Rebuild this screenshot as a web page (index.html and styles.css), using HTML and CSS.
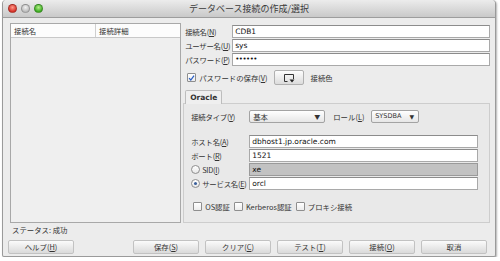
FILE: index.html
```html
<!DOCTYPE html>
<html lang="ja">
<head>
    <meta charset="UTF-8">
    <title>データベース接続の作成/選択</title>
    <link rel="stylesheet" href="styles.css">
</head>
<body>
    <div class="window">
        <div class="titlebar">
            <div class="lights">
                <span class="light red"></span>
                <span class="light gray"></span>
                <span class="light green"></span>
            </div>
            <div class="title">データベース接続の作成/選択</div>
        </div>

        <div class="main">
            <div class="left">
                <div class="list">
                    <div class="list-head">
                        <div class="col col-name">接続名</div>
                        <div class="col col-detail">接続詳細</div>
                    </div>
                </div>
                <div class="status">ステータス: 成功</div>
            </div>

            <div class="right">
                <div class="row">
                    <label class="label">接続名(<u>N</u>)</label>
                    <div class="input">CDB1</div>
                </div>
                <div class="row">
                    <label class="label">ユーザー名(<u>U</u>)</label>
                    <div class="input">sys</div>
                </div>
                <div class="row">
                    <label class="label">パスワード(<u>P</u>)</label>
                    <div class="input dots">••••••</div>
                </div>

                <div class="save-row">
                    <span class="check checked">
                        <svg width="8" height="8" viewBox="0 0 8 8"><path d="M1.2 4.2 L3.2 6.3 L6.9 1.2" fill="none" stroke="#2a5fc4" stroke-width="1.4"/></svg>
                    </span>
                    <span class="save-text">パスワードの保存(<u>V</u>)</span>
                    <button class="color-btn">
                        <svg width="12" height="10" viewBox="0 0 12 10"><path d="M4.5 8.5 H1.5 V1.5 H10.5 V6" fill="none" stroke="#333" stroke-width="1"/><path d="M6.5 6.5 H11.5 L9 9.5 Z" fill="#222"/></svg>
                    </button>
                    <span class="color-text">接続色</span>
                </div>

                <div class="tabs">
                    <div class="tab">Oracle</div>
                </div>
                <div class="panel">
                    <div class="type-row">
                        <span class="label-in">接続タイプ(<u>Y</u>)</span>
                        <div class="select select-type">基本<span class="arrow">▼</span></div>
                        <span class="role-label">ロール(<u>L</u>)</span>
                        <div class="select select-role">SYSDBA<span class="arrow">▼</span></div>
                    </div>

                    <div class="fields">
                        <div class="row">
                            <span class="label-in">ホスト名(<u>A</u>)</span>
                            <div class="input">dbhost1.jp.oracle.com</div>
                        </div>
                        <div class="row">
                            <span class="label-in">ポート(<u>R</u>)</span>
                            <div class="input">1521</div>
                        </div>
                        <div class="row">
                            <span class="label-in"><span class="radio"></span>SID(<u>I</u>)</span>
                            <div class="input disabled">xe</div>
                        </div>
                        <div class="row">
                            <span class="label-in"><span class="radio on"></span>サービス名(<u>E</u>)</span>
                            <div class="input">orcl</div>
                        </div>
                    </div>

                    <div class="opts">
                        <span class="check"></span><span class="opt">OS認証</span>
                        <span class="check"></span><span class="opt">Kerberos認証</span>
                        <span class="check"></span><span class="opt">プロキシ接続</span>
                    </div>
                </div>
            </div>
        </div>

        <div class="buttons">
            <button class="btn help">ヘルプ(<u>H</u>)</button>
            <button class="btn">保存(<u>S</u>)</button>
            <button class="btn">クリア(<u>C</u>)</button>
            <button class="btn">テスト(<u>T</u>)</button>
            <button class="btn">接続(<u>O</u>)</button>
            <button class="btn">取消</button>
        </div>
    </div>
</body>
</html>
```

FILE: styles.css
```css
body {
    margin: 0;
    background: #ffffff;
    font-family: "Noto Sans CJK JP", "Liberation Sans", sans-serif;
    font-size: 7.4px;
    color: #333333;
}

u {
    text-decoration: underline;
    text-underline-offset: 1px;
}

.window {
    width: 494px;
    height: 257px;
    margin-left: 2px;
    background: #ececec;
    border: 1px solid #9a9a9a;
    border-top: none;
    border-radius: 4px 4px 2px 2px;
    box-shadow: 1px 1px 2px rgba(0, 0, 0, 0.3);
    box-sizing: border-box;
    overflow: hidden;
}

.titlebar {
    height: 17px;
    display: flex;
    align-items: center;
    position: relative;
    background: linear-gradient(#ececec, #c9c9c9);
    border-bottom: 1px solid #9d9d9d;
    border-radius: 4px 4px 0 0;
}

.lights {
    display: flex;
    gap: 4px;
    padding-left: 5px;
}

.light {
    width: 9px;
    height: 9px;
    border-radius: 50%;
    box-sizing: border-box;
    border: 1px solid rgba(0, 0, 0, 0.25);
}

.light.red { background: radial-gradient(circle at 50% 35%, #ff9a8a, #d8332a 70%); }
.light.gray { background: radial-gradient(circle at 50% 35%, #f2f2f2, #bdbdbd 70%); }
.light.green { background: radial-gradient(circle at 50% 35%, #b5f08a, #3fae25 70%); }

.title {
    position: absolute;
    left: 0;
    right: 0;
    text-align: center;
    font-size: 9px;
    color: #3a3a3a;
}

.main {
    display: flex;
    padding: 5px 5px 0 7px;
}

.left {
    width: 173px;
}

.list {
    height: 198px;
    border: 1px solid #a8a8a8;
    background: #efefef;
}

.list-head {
    display: flex;
    height: 13px;
    background: #fcfcfc;
    border-bottom: 1px solid #c8c8c8;
    line-height: 13px;
}

.col {
    padding-left: 3px;
}

.col-name {
    width: 81px;
    border-right: 1px solid #cfcfcf;
}

.status {
    margin-top: 1px;
    padding-left: 2px;
    line-height: 12px;
}

.right {
    width: 310px;
    margin-left: 2px;
}

.row {
    display: flex;
    align-items: center;
    height: 14px;
}

.right > .row:first-child {
    margin-top: 1px;
}

.label {
    flex: none;
    width: 47px;
    padding-left: 2px;
    white-space: nowrap;
    letter-spacing: -0.25px;
}

.input {
    flex: 1;
    height: 13px;
    box-sizing: border-box;
    background: #fff;
    border: 1px solid #a9a9a9;
    border-top-color: #8c8c8c;
    padding-left: 2px;
    line-height: 11px;
    font-family: "DejaVu Sans", sans-serif;
    font-size: 7.5px;
    color: #111;
}

.input.dots {
    font-size: 7px;
    letter-spacing: -0.5px;
}

.input.disabled {
    background: #c2c2c2;
    border-color: #9a9a9a;
}

.save-row {
    display: flex;
    align-items: center;
    height: 15px;
    margin-top: 4px;
    padding-left: 4px;
}

.check {
    display: inline-flex;
    align-items: center;
    justify-content: center;
    width: 9px;
    height: 9px;
    box-sizing: border-box;
    border: 1px solid #8e8e8e;
    background: linear-gradient(#ffffff, #ececec);
    border-radius: 1px;
}

.save-text {
    margin-left: 3px;
}

.color-btn {
    width: 30px;
    height: 15px;
    margin-left: 6px;
    padding: 0;
    display: flex;
    align-items: center;
    justify-content: center;
    background: linear-gradient(#fdfdfd, #dcdcdc);
    border: 1px solid #b0b0b0;
    border-radius: 2px;
}

.color-text {
    margin-left: 7px;
}

.tabs {
    display: flex;
    margin-top: 5px;
    padding-left: 2px;
}

.tab {
    height: 13px;
    padding: 0 4px;
    line-height: 13px;
    font-family: "DejaVu Sans", sans-serif;
    font-weight: bold;
    font-size: 7.5px;
    background: #efefef;
    border: 1px solid #bdbdbd;
    border-bottom: none;
    border-radius: 2px 2px 0 0;
    margin-bottom: -1px;
    position: relative;
}

.panel {
    height: 120px;
    box-sizing: border-box;
    border: 1px solid #cdcdcd;
    background: #e9e9e9;
    padding: 6px 11px 0 7px;
}

.type-row {
    display: flex;
    align-items: center;
    height: 13px;
}

.label-in {
    flex: none;
    display: flex;
    align-items: center;
    width: 58px;
    white-space: nowrap;
    letter-spacing: -0.25px;
}

.select {
    position: relative;
    height: 13px;
    box-sizing: border-box;
    border: 1px solid #a3a3a3;
    background: linear-gradient(#ffffff, #e6e6e6);
    line-height: 11px;
    padding-left: 3px;
    border-radius: 2px;
}

.arrow {
    position: absolute;
    right: 4px;
    top: 0;
    font-size: 6px;
}

.select-type {
    width: 76px;
}

.role-label {
    margin-left: 8px;
    width: 38px;
}

.select-role {
    width: 48px;
    font-family: "DejaVu Sans", sans-serif;
    font-size: 6.5px;
}

.fields {
    margin-top: 11px;
}

.radio {
    display: inline-block;
    flex: none;
    width: 9px;
    height: 9px;
    box-sizing: border-box;
    border: 1px solid #8e8e8e;
    border-radius: 50%;
    background: linear-gradient(#ffffff, #e8e8e8);
    margin-right: 2px;
    position: relative;
}

.radio.on::after {
    content: "";
    position: absolute;
    left: 2px;
    top: 2px;
    width: 3px;
    height: 3px;
    border-radius: 50%;
    background: #3a5f9a;
}

.opts {
    display: flex;
    align-items: center;
    margin-top: 11px;
    padding-left: 2px;
}

.opt {
    margin-left: 3px;
    margin-right: 4px;
}

.buttons {
    display: flex;
    gap: 6px;
    padding: 4px 8px 0 5px;
}

.btn {
    width: 66px;
    height: 14px;
    padding: 0;
    font-family: "Noto Sans CJK JP", sans-serif;
    font-size: 7.4px;
    color: #333;
    background: linear-gradient(#fbfbfb, #dadada);
    border: 1px solid #c2c2c2;
    border-radius: 2px;
    line-height: 12px;
}

.btn.help {
    margin-right: auto;
}
```
